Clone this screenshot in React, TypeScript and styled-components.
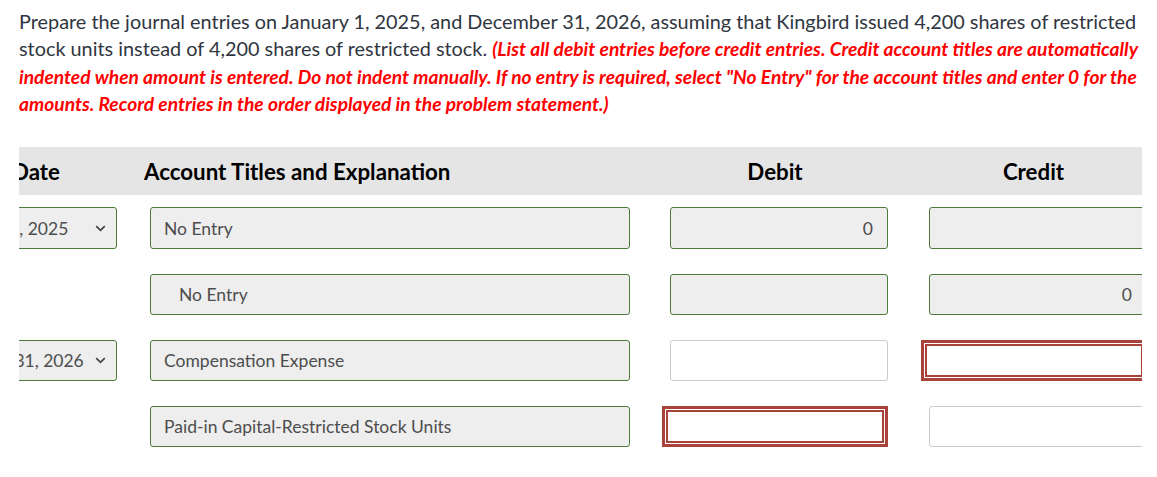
import React from 'react';
import styled, { createGlobalStyle } from 'styled-components';

const GlobalStyle = createGlobalStyle`
  body {
    margin: 0;
    background: #ffffff;
    font-family: Lato, "Open Sans", sans-serif;
    color: #333333;
  }
`;

const Page = styled.div`
  padding: 8px 15px 0 19px;
`;

const Prompt = styled.p`
  margin: 0;
  font-size: 19.85px;
  line-height: 27.3px;
  color: #2f3640;
  white-space: nowrap;
`;

const Instructions = styled.strong`
  color: #ff0000;
  font-style: italic;
  font-weight: 700;
  font-size: 19.2px;
`;

const Viewport = styled.div`
  margin-top: 30px;
  overflow: hidden;
`;

const Table = styled.div`
  margin-left: -59px;
  width: 1240px;
`;

const HeaderBand = styled.div`
  display: flex;
  align-items: center;
  height: 48px;
  background: #e5e5e5;
  margin-bottom: 12px;
`;

const HeadCell = styled.div<{ $w: number; $ml: number; $align: 'left' | 'center'; $shift?: number }>`
  width: ${(p) => p.$w}px;
  margin-left: ${(p) => p.$ml}px;
  text-align: ${(p) => p.$align};
  padding-right: ${(p) => p.$shift ?? 0}px;
  box-sizing: border-box;
  font-weight: 700;
  font-size: 22.3px;
  color: #000000;
  white-space: nowrap;
`;

const Row = styled.div<{ $h: number }>`
  display: flex;
  align-items: stretch;
  height: ${(p) => p.$h}px;
  margin-bottom: 25px;
`;

const Select = styled.div<{ $w: number; $ml: number }>`
  box-sizing: border-box;
  width: ${(p) => p.$w}px;
  margin-left: ${(p) => p.$ml}px;
  display: flex;
  align-items: center;
  justify-content: space-between;
  padding: 0 10px 0 14px;
  border: 1px solid #4b7a3b;
  border-radius: 3px;
  background: #eeeeee;
  font-size: 17.5px;
  color: #4d4d4d;
`;

const Blank = styled.div<{ $w: number; $ml: number }>`
  width: ${(p) => p.$w}px;
  margin-left: ${(p) => p.$ml}px;
`;

const Field = styled.div<{ $w: number; $ml: number; $filled: boolean; $indent?: boolean; $right?: boolean }>`
  box-sizing: border-box;
  width: ${(p) => p.$w}px;
  margin-left: ${(p) => p.$ml}px;
  display: flex;
  align-items: center;
  justify-content: ${(p) => (p.$right ? 'flex-end' : 'flex-start')};
  padding: 0 ${(p) => (p.$right ? 14 : 0)}px 0 ${(p) => (p.$indent ? 28 : 13)}px;
  border: 1px solid ${(p) => (p.$filled ? '#4b7a3b' : '#cccccc')};
  border-radius: 3px;
  background: ${(p) => (p.$filled ? '#eeeeee' : '#ffffff')};
  font-size: 17.5px;
  color: #4d4d4d;
  white-space: nowrap;
`;

const ErrorField = styled.div<{ $w: number; $ml: number }>`
  box-sizing: border-box;
  width: ${(p) => p.$w}px;
  margin-left: ${(p) => p.$ml}px;
  border: 3px solid #a8423b;
  box-shadow: inset 0 0 0 1px #ffffff, inset 0 0 0 3px #a8423b;
  background: #ffffff;
`;

const Chevron = () => (
  <svg width="11" height="7" viewBox="0 0 11 7" fill="none">
    <path d="M1.2 1.2 L5.5 5.4 L9.8 1.2" stroke="#444" strokeWidth="1.7" />
  </svg>
);

type Cell =
  | { kind: 'select'; text: string }
  | { kind: 'blank' }
  | { kind: 'field'; text?: string; filled: boolean; indent?: boolean }
  | { kind: 'error' };

const cols = [
  { w: 157, ml: 0 },
  { w: 480, ml: 33 },
  { w: 218, ml: 40 },
  { w: 218, ml: 41 },
];

const rows: Cell[][] = [
  [
    { kind: 'select', text: 'Jan. 1, 2025' },
    { kind: 'field', text: 'No Entry', filled: true },
    { kind: 'field', text: '0', filled: true },
    { kind: 'field', filled: true },
  ],
  [
    { kind: 'blank' },
    { kind: 'field', text: 'No Entry', filled: true, indent: true },
    { kind: 'field', filled: true },
    { kind: 'field', text: '0', filled: true },
  ],
  [
    { kind: 'select', text: 'Dec. 31, 2026' },
    { kind: 'field', text: 'Compensation Expense', filled: true },
    { kind: 'field', filled: false },
    { kind: 'error' },
  ],
  [
    { kind: 'blank' },
    { kind: 'field', text: 'Paid-in Capital-Restricted Stock Units', filled: true },
    { kind: 'error' },
    { kind: 'field', filled: false },
  ],
];

function renderCell(cell: Cell, i: number) {
  const { w, ml } = cols[i];
  const amount = i >= 2;
  switch (cell.kind) {
    case 'select':
      return (
        <Select key={i} $w={w} $ml={ml}>
          <span>{cell.text}</span>
          <Chevron />
        </Select>
      );
    case 'blank':
      return <Blank key={i} $w={w} $ml={ml} />;
    case 'error':
      return <ErrorField key={i} $w={w + 8} $ml={ml - 8} />;
    default:
      return (
        <Field key={i} $w={w} $ml={ml} $filled={cell.filled} $indent={cell.indent} $right={amount}>
          {cell.text}
        </Field>
      );
  }
}

function App() {
  return (
    <Page>
      <GlobalStyle />
      <Prompt>
        Prepare the journal entries on January 1, 2025, and December 31, 2026, assuming that Kingbird issued 4,200
        shares of restricted
        <br />
        stock units instead of 4,200 shares of restricted stock.{' '}
        <Instructions>
          (List all debit entries before credit entries. Credit account titles are automatically
          <br />
          indented when amount is entered. Do not indent manually. If no entry is required, select "No Entry" for the
          account titles and enter 0 for the
          <br />
          amounts. Record entries in the order displayed in the problem statement.)
        </Instructions>
      </Prompt>
      <Viewport>
        <Table>
          <HeaderBand>
            <HeadCell $w={157} $ml={0} $align="center" $shift={5}>
              Date
            </HeadCell>
            <HeadCell $w={480} $ml={27} $align="left">
              Account Titles and Explanation
            </HeadCell>
            <HeadCell $w={218} $ml={46} $align="center" $shift={8}>
              Debit
            </HeadCell>
            <HeadCell $w={218} $ml={41} $align="center" $shift={9}>
              Credit
            </HeadCell>
          </HeaderBand>
          {rows.map((row, r) => (
            <Row key={r} $h={r === 0 ? 42 : 41}>
              {row.map(renderCell)}
            </Row>
          ))}
        </Table>
      </Viewport>
    </Page>
  );
}

export default App;
